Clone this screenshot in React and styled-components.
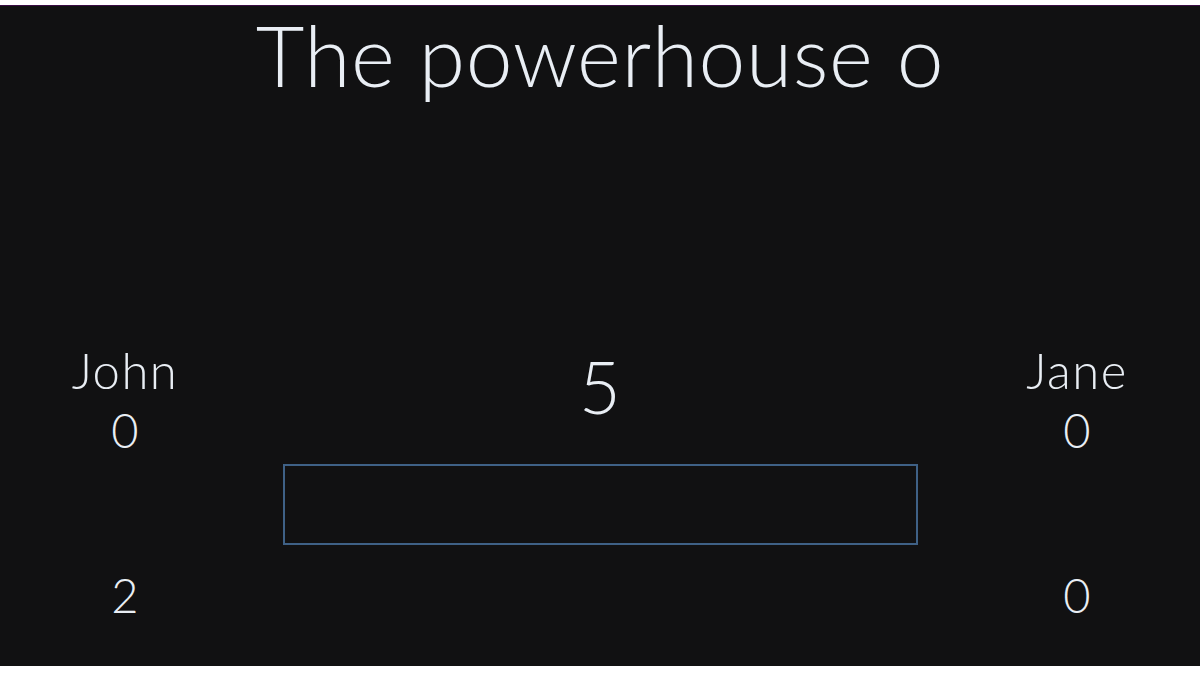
import React from "react";
import styled, { createGlobalStyle } from "styled-components";

const Global = createGlobalStyle`
  html, body { margin: 0; padding: 0; background: #ffffff; }
  body { padding-top: 5px; font-family: Lato, "Noto Sans", sans-serif; }
`;

const Stage = styled.main`
  box-sizing: border-box;
  height: 661px;
  background: #111112;
  border-top: 1px solid #3a0c44;
  color: #e9eef4;
  display: flex;
  flex-direction: column;
  align-items: stretch;
`;

const Title = styled.h1`
  margin: 0;
  padding-top: 1px;
  text-align: center;
  font-weight: 300;
  font-size: 84px;
  line-height: 96px;
  letter-spacing: 0.6px;
`;

const Board = styled.section`
  margin-top: 237px;
  display: grid;
  grid-template-columns: 250px 1fr 250px;
`;

const Side = styled.div`
  display: flex;
  flex-direction: column;
  align-items: center;
  padding-left: ${(p) => (p.$right ? "4px" : "0")};
`;

const Name = styled.div`
  font-weight: 300;
  font-size: 49px;
  line-height: 60px;
  letter-spacing: 1.5px;
`;

const Score = styled.div`
  font-weight: 300;
  font-size: 47px;
  line-height: 60px;
`;

const Tally = styled(Score)`
  margin-top: 105px;
`;

const Center = styled.div`
  display: flex;
  flex-direction: column;
  align-items: center;
`;

const Count = styled.div`
  font-weight: 300;
  font-size: 72px;
  line-height: 84px;
  padding-top: 4px;
`;

const Field = styled.div`
  box-sizing: border-box;
  margin-top: 36px;
  width: 635px;
  height: 81px;
  border: 2px solid #3f6186;
  background: #111112;
`;

export default function App() {
  return (
    <>
      <Global />
      <Stage>
        <Title>The powerhouse o</Title>
        <Board>
          <Side>
            <Name>John</Name>
            <Score>0</Score>
            <Tally>2</Tally>
          </Side>
          <Center>
            <Count>5</Count>
            <Field />
          </Center>
          <Side $right>
            <Name>Jane</Name>
            <Score>0</Score>
            <Tally>0</Tally>
          </Side>
        </Board>
      </Stage>
    </>
  );
}
